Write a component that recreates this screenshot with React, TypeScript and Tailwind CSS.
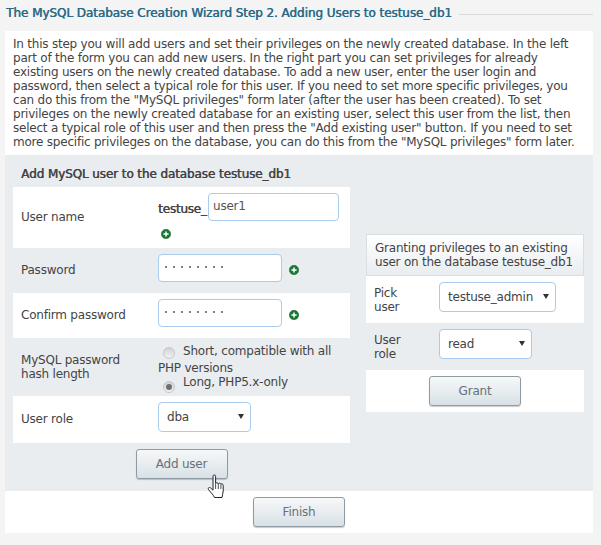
import React from "react";

const font = "font-['DejaVu_Sans',sans-serif]";
const fauxBold = "font-normal [text-shadow:0.5px_0_0_currentColor]";

const PlusIcon: React.FC<{className?: string}> = ({className}) => (
    <svg width="10" height="10" viewBox="0 0 10 10" className={className}>
        <circle cx="5" cy="5" r="4.7" fill="#157a33" stroke="#0f5c26" strokeWidth="0.5"/>
        <path d="M5 2.400v5.200M2.400 5h5.200" stroke="#fff" strokeWidth="1.500"/>
    </svg>
);

const Radio: React.FC<{checked?: boolean}> = ({checked}) => (
    <span className="inline-flex items-center justify-center w-[12px] h-[12px] rounded-full border border-[#c4c8cb] bg-gradient-to-b from-[#d0d2d4] to-[#f2f3f4] align-[-4px]">
        {checked && <span className="block w-[6px] h-[6px] rounded-full bg-[#6d6f71]"/>}
    </span>
);

const FakeInput: React.FC<{width: string; children: React.ReactNode}> = ({width, children}) => (
    <div className={`${width} h-[28px] bg-white border border-[#a9cbee] rounded-[4px] px-[4px] flex items-center text-[#555]`}>
        {children}
    </div>
);

const FakeSelect: React.FC<{width: string; value: string}> = ({width, value}) => (
    <div className={`${width} h-[30px] bg-white border border-[#a9cbee] rounded-[4px] pl-[8px] pr-[6px] flex items-center justify-between text-[#444]`}>
        <span>{value}</span>
        <span className="-mt-[2px] w-0 h-0 border-l-[3px] border-r-[3px] border-t-[5px] border-l-transparent border-r-transparent border-t-[#333]"/>
    </div>
);

const GrayButton: React.FC<{label: string; className?: string}> = ({label, className}) => (
    <button className={`w-[92px] h-[30px] rounded-[3px] border border-[#8f9ba3] bg-gradient-to-b from-[#f6f8f9] to-[#d9e1e6] text-[#66727a] shadow-[0_1px_1px_rgba(0,0,0,0.2)] ${className ?? ""}`}>
        {label}
    </button>
);

const Dots: React.FC = () => (
    <span className="flex gap-[6px] pl-[2px] -mt-[2px]">
        {[0, 1, 2, 3, 4, 5, 6, 7].map((i) => (
            <span key={i} className="w-[2px] h-[2px] rounded-full bg-[#555]"/>
        ))}
    </span>
);

const App: React.FC = () => {
    return (
        <div className={`w-[601px] h-[545px] bg-[#f4f4f4] overflow-hidden text-[12px] tracking-[-0.22px] leading-[14px] text-[#444] ${font}`}>
            {/* Title */}
            <div className="h-[31px] w-[593px] pl-[6px] pt-[6px] flex items-start">
                <h1 className={`${fauxBold} text-[12px] tracking-[-0.06px] leading-[14px] text-[#2a6a87] whitespace-nowrap`}>
                    The MySQL Database Creation Wizard Step 2. Adding Users to testuse_db1
                </h1>
                <div className="flex-1 ml-[7px] mt-[8px] border-t border-[#d8d8d8]"/>
            </div>

            <div className="ml-[5px] w-[588px] h-[502px] bg-white">
                {/* Intro */}
                <p className="h-[124px] pl-[8px] pt-[6px] whitespace-nowrap">
                    In this step you will add users and set their privileges on the newly created database. In the left<br/>
                    part of the form you can add new users. In the right part you can set privileges for already<br/>
                    existing users on the newly created database. To add a new user, enter the user login and<br/>
                    password, then select a typical role for this user. If you need to set more specific privileges, you<br/>
                    can do this from the "MySQL privileges" form later (after the user has been created). To set<br/>
                    privileges on the newly created database for an existing user, select this user from the list, then<br/>
                    select a typical role of this user and then press the "Add existing user" button. If you need to set<br/>
                    more specific privileges on the database, you can do this from the "MySQL privileges" form later.
                </p>

                <div className="h-[336px] bg-[#e9edf0] flex">
                    {/* Left form */}
                    <div className="w-[345px] pl-[8px]">
                        <div className={`${fauxBold} tracking-[-0.1px] h-[32px] pl-[8px] pt-[12px]`}>
                            Add MySQL user to the database testuse_db1
                        </div>
                        <div className="h-[61px] bg-white flex">
                            <div className="w-[145px] pl-[8px] pt-[23px]">User name</div>
                            <div className="pt-[6px]">
                                <div className="flex items-center">
                                    <span className={`${fauxBold} w-[50px] pt-[4px] whitespace-nowrap`}>testuse_</span>
                                    <FakeInput width="w-[131px]"><span className="-mt-[3px]">user1</span></FakeInput>
                                </div>
                                <PlusIcon className="ml-[3px] mt-[8px]"/>
                            </div>
                        </div>
                        <div className="h-[45px] flex">
                            <div className="w-[145px] pl-[8px] pt-[15px]">Password</div>
                            <div className="pt-[6px] flex items-center h-[34px]">
                                <FakeInput width="w-[124px]"><Dots/></FakeInput>
                                <PlusIcon className="ml-[7px] mt-[3px]"/>
                            </div>
                        </div>
                        <div className="h-[45px] bg-white flex">
                            <div className="w-[145px] pl-[8px] pt-[15px]">Confirm password</div>
                            <div className="pt-[6px] flex items-center h-[34px]">
                                <FakeInput width="w-[124px]"><Dots/></FakeInput>
                                <PlusIcon className="ml-[7px] mt-[3px]"/>
                            </div>
                        </div>
                        <div className="h-[58px] flex">
                            <div className="w-[145px] pl-[8px] pt-[15px]">MySQL password<br/>hash length</div>
                            <div className="w-[185px] pt-[6px] whitespace-nowrap">
                                <div className="pl-[5px]"><Radio/><span className="ml-[8px]">Short, compatible with all</span></div>
                                <div className="mt-[2px]">PHP versions</div>
                                <div className="pl-[5px]"><Radio checked/><span className="ml-[8px]">Long, PHP5.x-only</span></div>
                            </div>
                        </div>
                        <div className="h-[47px] bg-white flex">
                            <div className="w-[145px] pl-[8px] pt-[16px]">User role</div>
                            <div className="pt-[6px]"><FakeSelect width="w-[93px]" value="dba"/></div>
                        </div>
                        <div className="flex justify-center pt-[6px]">
                            <div className="relative">
                                <GrayButton label="Add user" className="border-[#6f7a82]"/>
                                {/* cursor over the button */}
                                <svg width="18" height="25" viewBox="0 0 18 25" className="absolute left-[71px] top-[25px]">
                                    <path d="M6 2.200c0-1.600 2.600-1.600 2.600 0V9.500c.3-1 2.500-1 2.700.3.4-.9 2.400-.8 2.600.5.5-.7 2.300-.4 2.300 1V17c0 2.500-1 4-1.200 6.500H7.500C6.500 21 4.500 19.500 1.500 15.500c-.9-1.300.7-2.800 2-1.600L6 16.200Z" fill="#fff" stroke="#222" strokeWidth="1"/>
                                    <path d="M8.600 10v5M11.300 10v5M13.900 10.500v4.500" stroke="#222" strokeWidth="0.8" fill="none"/>
                                </svg>
                            </div>
                        </div>
                    </div>

                    {/* Right form */}
                    <div className="ml-[16px] w-[218px] pt-[79px]">
                        <div className="h-[42px] border border-[#d8dfe3] bg-gradient-to-b from-white to-[#e9edf0] pl-[8px] pt-[6px] whitespace-nowrap">
                            Granting privileges to an existing<br/>user on the database testuse_db1
                        </div>
                        <div className="h-[47px] bg-white flex">
                            <div className="w-[73px] pl-[8px] pt-[10px]">Pick<br/>user</div>
                            <div className="pt-[6px]"><FakeSelect width="w-[117px]" value="testuse_admin"/></div>
                        </div>
                        <div className="h-[47px] flex">
                            <div className="w-[73px] pl-[8px] pt-[10px]">User<br/>role</div>
                            <div className="pt-[6px]"><FakeSelect width="w-[93px]" value="read"/></div>
                        </div>
                        <div className="h-[42px] bg-white flex justify-center pt-[6px]">
                            <GrayButton label="Grant"/>
                        </div>
                    </div>
                </div>

                <div className="flex justify-center pt-[6px]">
                    <GrayButton label="Finish"/>
                </div>
            </div>
        </div>
    );
};

export default App;
